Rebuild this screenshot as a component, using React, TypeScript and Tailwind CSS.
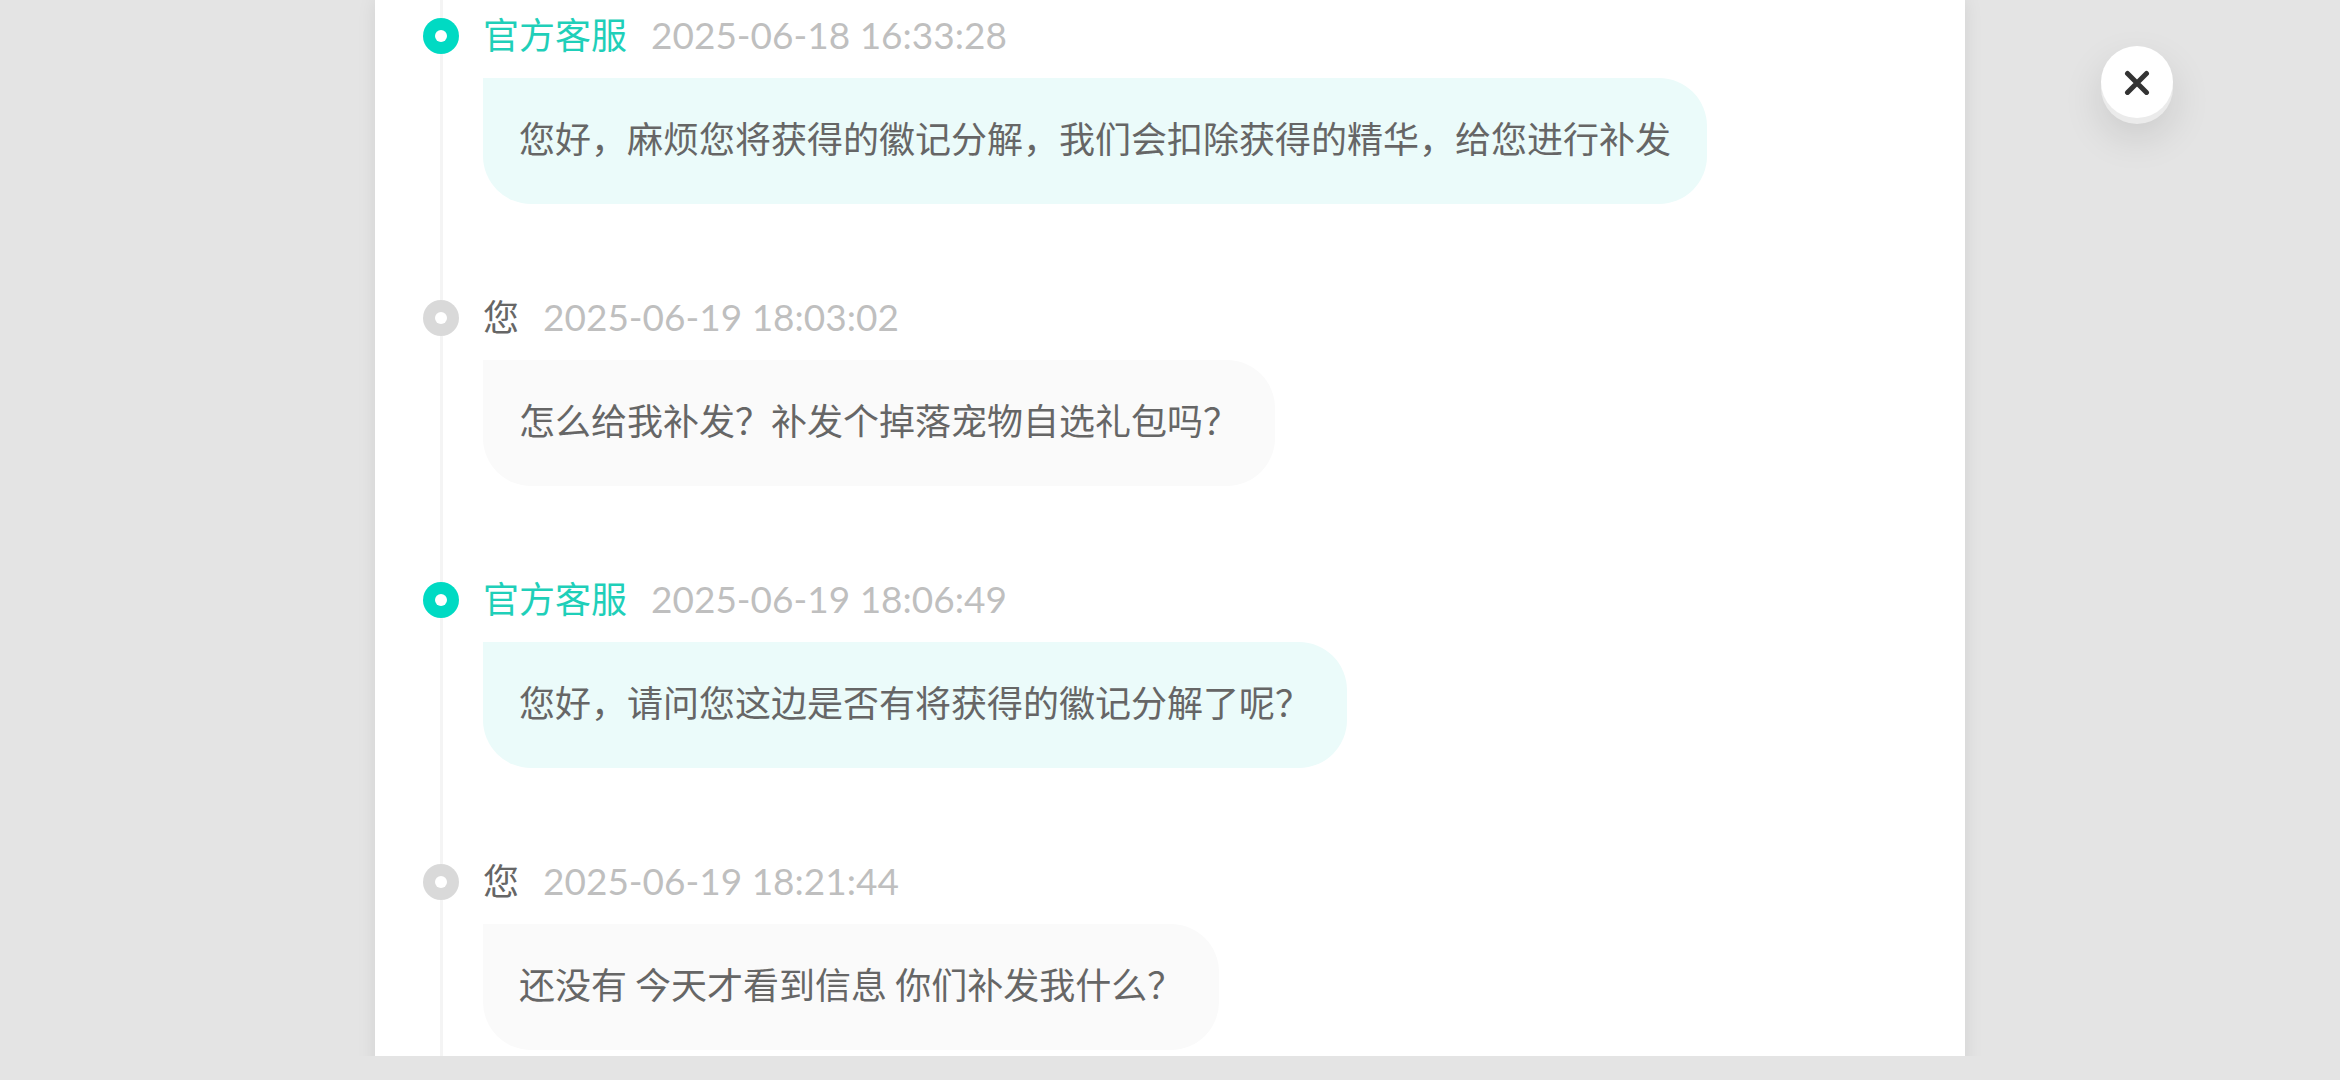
import React from 'react';

const messages = [
  {
    id: 1,
    author: '官方客服',
    official: true,
    time: '2025-06-18 16:33:28',
    text: '您好，麻烦您将获得的徽记分解，我们会扣除获得的精华，给您进行补发',
  },
  {
    id: 2,
    author: '您',
    official: false,
    time: '2025-06-19 18:03:02',
    text: '怎么给我补发？补发个掉落宠物自选礼包吗？',
  },
  {
    id: 3,
    author: '官方客服',
    official: true,
    time: '2025-06-19 18:06:49',
    text: '您好，请问您这边是否有将获得的徽记分解了呢？',
  },
  {
    id: 4,
    author: '您',
    official: false,
    time: '2025-06-19 18:21:44',
    text: '还没有 今天才看到信息 你们补发我什么？',
  },
];

function Message({ author, official, time, text }: { author: string; official: boolean; time: string; text: string }) {
  return (
    <li className="flex gap-6">
      {/* Timeline rail */}
      <div className="w-9 shrink-0 flex flex-col items-center">
        <span className="h-[18px] w-[3px] bg-[#f4f4f4]" />
        <span className={`w-9 h-9 shrink-0 rounded-full flex items-center justify-center ${official ? 'bg-[#00dac3]' : 'bg-[#d9d9d9]'}`}>
          <span className="w-3 h-3 rounded-full bg-white" />
        </span>
        <span className="flex-1 w-[3px] bg-[#f4f4f4]" />
      </div>

      <article className="min-w-0 pt-[6px] pb-[78px]">
        <header className="h-[72px] flex items-baseline gap-6 leading-[54px]">
          <span className={official ? 'text-[#1fcfb9]' : 'text-[#666666]'}>{author}</span>
          <time className="font-[Lato] text-[37px] text-[#bfbfbf]">{time}</time>
        </header>
        <p className={`w-fit px-9 pt-8 pb-10 rounded-[48px] rounded-tl-none leading-[54px] text-[#666666] ${official ? 'bg-[#ebfbfa]' : 'bg-[#fafafa]'}`}>
          {text}
        </p>
      </article>
    </li>
  );
}

export default function App() {
  return (
    <div
      lang="zh-CN"
      className="h-screen overflow-hidden bg-[#e4e4e4] pb-6 grid grid-cols-[1fr_minmax(0,1590px)_1fr] grid-rows-[minmax(0,1fr)] text-[36px] font-['Noto_Sans_CJK_SC',sans-serif]"
    >
      {/* Message history */}
      <main className="col-span-3 col-start-1 row-start-1 overflow-hidden grid grid-cols-subgrid">
        <ol className="col-start-2 min-h-full h-fit bg-white px-12 shadow-[0_0_18px_rgba(0,0,0,0.08)]">
          {messages.map((m) => (
            <Message key={m.id} author={m.author} official={m.official} time={m.time} text={m.text} />
          ))}
        </ol>
      </main>

      <button
        type="button"
        aria-label="关闭"
        className="col-start-3 row-start-1 z-10 w-[72px] h-[72px] mt-[46px] ml-[136px] rounded-full bg-white text-[#333333] flex items-center justify-center cursor-pointer shadow-[0_6px_0_#ebebeb,0_18px_42px_rgba(0,0,0,0.12)]"
      >
        <svg width="26" height="26" viewBox="0 0 26 26" fill="none" stroke="currentColor" strokeWidth="5" strokeLinecap="round">
          <path d="M3.5 4.5 22.5 23.5M22.5 4.5 3.5 23.5" />
        </svg>
      </button>
    </div>
  );
}
